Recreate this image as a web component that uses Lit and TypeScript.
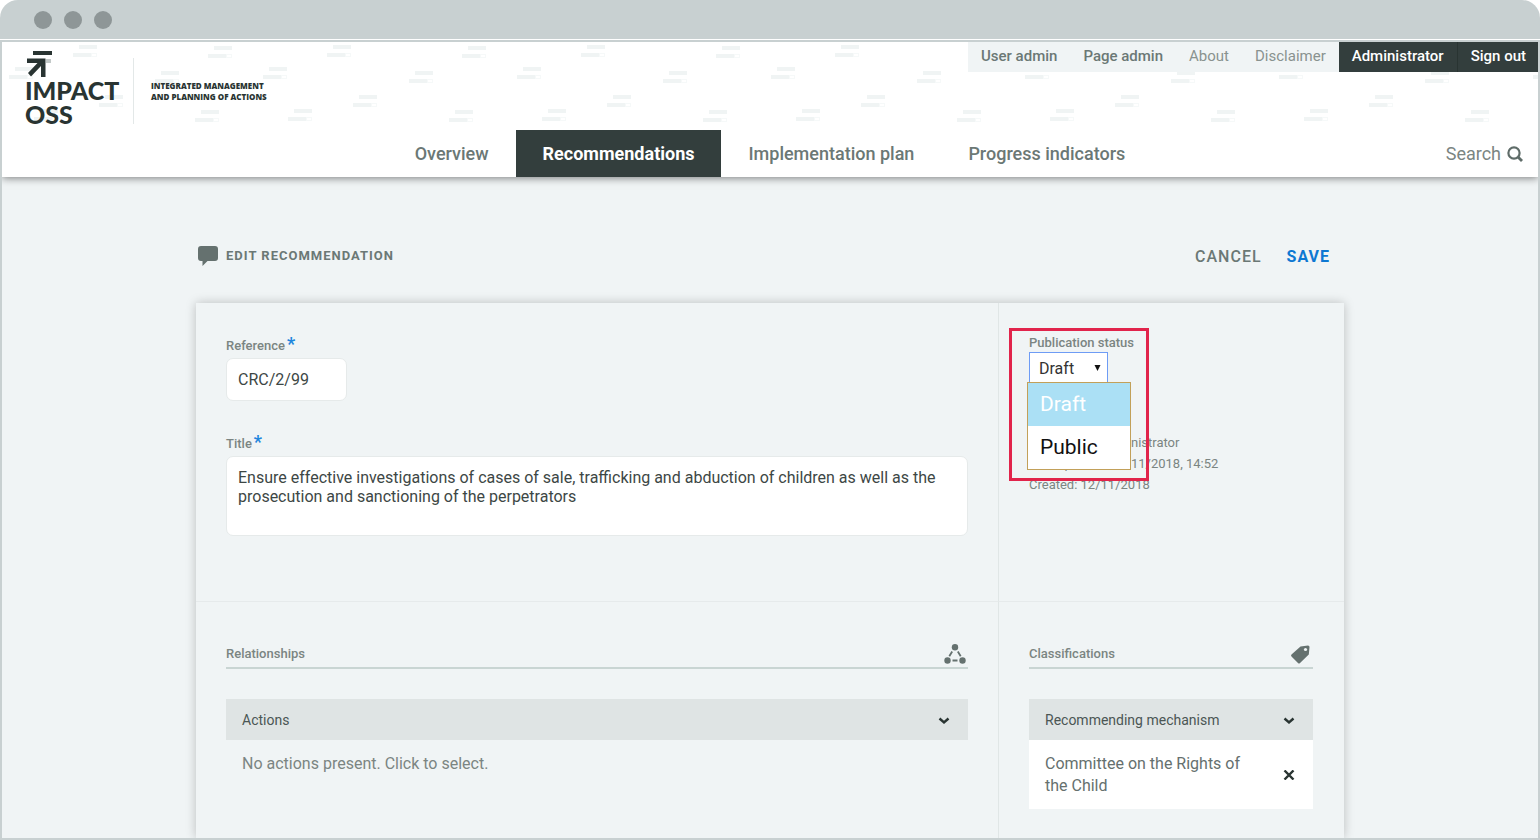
import { LitElement, html, css, svg } from "lit";
import { customElement, property, state } from "lit/decorators.js";
import { classMap } from "lit/directives/class-map.js";

const reset = css`
  *,
  *::before,
  *::after {
    box-sizing: border-box;
  }
  a {
    color: inherit;
    text-decoration: none;
  }
  button {
    border: 0;
    margin: 0;
    padding: 0;
    background: none;
    font: inherit;
    color: inherit;
    cursor: pointer;
  }
  svg {
    display: block;
    flex: none;
  }
`;

/* Positions of the staggered bars inside one 254px wide pattern tile. */
const MARKS = [
  [77, 3],
  [212, 4],
  [159, 29],
  [13, 25],
  [103, 53],
  [199, 68],
  [38, 67],
];

@customElement("site-header")
export class SiteHeader extends LitElement {
  static styles = [
    reset,
    css`
      :host {
        display: block;
        position: relative;
        z-index: 1;
        background: #fff;
        color: #6b7875;
        box-shadow: 0 1px 8px rgba(0, 0, 0, 0.5);
      }
      .pattern {
        position: absolute;
        inset: 0;
        width: 100%;
        height: 88px;
      }
      .top {
        position: relative;
        display: flex;
        justify-content: space-between;
        align-items: flex-start;
        min-height: 88px;
      }
      .brand {
        display: flex;
        align-items: flex-end;
        padding: 9px 0 0 23px;
        color: #293432;
      }
      .name {
        width: 108px;
        font-family: Lato, sans-serif;
        font-size: 25px;
        font-weight: 900;
        line-height: 24px;
      }
      .name svg {
        margin-left: 2px;
      }
      .tagline {
        display: flex;
        align-items: center;
        height: 66px;
        margin-bottom: 2px;
        padding-left: 17px;
        border-left: 1px solid #e3e8e8;
        font-family: "Open Sans", sans-serif;
        font-size: 8px;
        font-weight: 800;
        line-height: 11px;
      }
      .utility {
        display: flex;
        background: #f0f4f5;
        font-size: 15px;
        line-height: 28px;
      }
      .utility a {
        height: 30px;
        padding: 0 13px;
      }
      .utility .plain {
        color: #89928f;
      }
      .utility .strong {
        font-weight: 500;
      }
      .utility .dark {
        background: #333e3d;
        color: #fff;
        font-weight: 500;
      }
      .utility .dark + .dark {
        padding-right: 12px;
        border-left: 1px solid #293432;
      }
      .main {
        position: relative;
        display: grid;
        grid-template-columns: 1fr auto 1fr;
      }
      nav.tabs {
        grid-column: 2;
        display: flex;
      }
      .tabs a {
        padding: 0 27px;
        font-size: 18px;
        font-weight: 500;
        line-height: 47px;
      }
      .tabs .current {
        background: #333e3d;
        color: #fff;
        font-weight: 700;
      }
      .search {
        justify-self: end;
        display: flex;
        align-items: center;
        gap: 6px;
        padding-right: 15px;
        font-size: 18px;
        color: #7b8582;
      }
    `,
  ];

  render() {
    return html`
      <svg class="pattern" aria-hidden="true">
        <defs>
          <pattern id="bars" width="254" height="88" patternUnits="userSpaceOnUse">
            ${MARKS.map(
              ([x, y]) => svg`
                <rect x=${x} y=${y} width="18" height="4" fill="#f0f4f4" />
                <rect x=${x - 6} y=${y + 8} width="18" height="4" fill="#f0f4f4" />
                <rect x=${x + 12.5} y=${y + 8.5} width="5" height="3" fill="none" stroke="#f6f9f9" />
              `
            )}
          </pattern>
        </defs>
        <rect width="100%" height="88" fill="url(#bars)" />
      </svg>
      <div class="top">
        <a class="brand" href="#">
          <span class="name">
            <svg width="26" height="27" viewBox="0 0 26 27" fill="#293432">
              <rect x="6" y="0" width="19" height="4" />
              <rect x="19" y="8" width="5" height="4" fill="#c3c9c8" />
              <path d="M0 7.500H18.500V26H14V15L4 25.500L1 22L10.500 12H0Z" />
            </svg>
            IMPACT<br />OSS
          </span>
          <span class="tagline">INTEGRATED MANAGEMENT<br />AND PLANNING OF ACTIONS</span>
        </a>
        <nav class="utility" aria-label="Account">
          <a class="strong" href="#">User admin</a>
          <a class="strong" href="#">Page admin</a>
          <a class="plain" href="#">About</a>
          <a class="plain" href="#">Disclaimer</a>
          <a class="dark" href="#">Administrator</a>
          <a class="dark" href="#">Sign out</a>
        </nav>
      </div>
      <div class="main">
        <nav class="tabs" aria-label="Main">
          <a href="#">Overview</a>
          <a class="current" href="#" aria-current="page">Recommendations</a>
          <a href="#">Implementation plan</a>
          <a href="#">Progress indicators</a>
        </nav>
        <a class="search" href="#">
          Search
          <svg width="16" height="16" viewBox="0 0 16 16" fill="none" stroke="#5f6c69">
            <circle cx="7" cy="7" r="5.600" stroke-width="2.200" />
            <path d="M11 11L15 15" stroke-width="2.800" />
          </svg>
        </a>
      </div>
    `;
  }
}

@customElement("status-select")
export class StatusSelect extends LitElement {
  @property({ type: Array }) options: string[] = ["Draft", "Public"];
  @state() private value = "Draft";
  @state() private open = true;

  static styles = [
    reset,
    css`
      :host {
        display: block;
        position: relative;
      }
      label {
        display: block;
        margin-bottom: 1px;
        font-size: 13px;
        font-weight: 500;
        line-height: 16px;
        color: #7b8582;
      }
      .box {
        position: relative;
        width: 79px;
      }
      select {
        display: block;
        width: 100%;
        height: 32px;
        padding: 0 9px;
        border: 1px solid #6e9cf5;
        border-radius: 0;
        outline: 0;
        appearance: none;
        background: #fff;
        font-family: inherit;
        font-size: 16px;
        color: #333;
      }
      .arrow {
        position: absolute;
        right: 7px;
        top: 13px;
        pointer-events: none;
      }
      .menu {
        position: absolute;
        top: 30px;
        left: -2px;
        z-index: 2;
        width: 104px;
        margin: 0;
        padding: 0;
        border: 1px solid #c2a059;
        background: #fff;
        list-style: none;
      }
      .option {
        height: 43px;
        padding-left: 12px;
        font-size: 21px;
        line-height: 43px;
        color: #111;
        cursor: pointer;
      }
      .option.active {
        background: #abe0f5;
        color: #fff;
      }
      .highlight {
        position: absolute;
        inset: -7px auto auto -20px;
        z-index: 3;
        width: 140px;
        height: 153px;
        border: 3px solid #e1244b;
        pointer-events: none;
      }
    `,
  ];

  private pick(option: string) {
    this.value = option;
    this.open = false;
  }

  render() {
    return html`
      <label for="status">Publication status</label>
      <div class="box">
        <select id="status" .value=${this.value}>
          ${this.options.map((o) => html`<option value=${o}>${o}</option>`)}
        </select>
        <svg class="arrow" width="7" height="6" viewBox="0 0 7 6">
          <path d="M0.500 0H6.500L3.500 6Z" fill="#111" />
        </svg>
        ${this.open
          ? html`<ul class="menu" role="listbox" aria-label="Publication status">
              ${this.options.map(
                (o) => html`<li
                  role="option"
                  aria-selected=${o === this.value}
                  class=${classMap({ option: true, active: o === this.value })}
                  @click=${() => this.pick(o)}
                >${o}</li>`
              )}
            </ul>`
          : null}
      </div>
      <div class="highlight"></div>
    `;
  }
}

const chevron = html`<svg width="12" height="8" viewBox="0 0 12 8" fill="none" stroke="#293432" stroke-width="2.400">
  <path d="M1.500 1.500L6 5.500L10.500 1.500" />
</svg>`;

@customElement("app-root")
export class AppRoot extends LitElement {
  static styles = [
    reset,
    css`
      :host {
        display: flex;
        flex-direction: column;
        min-height: 100vh;
        background: #fff;
        font-family: Roboto, sans-serif;
        color: #6b7875;
      }
      .chrome {
        display: flex;
        align-items: center;
        gap: 12px;
        height: 39px;
        margin-bottom: 1px;
        padding-left: 34px;
        border-radius: 18px 18px 0 0;
        background: #c8d0d1;
      }
      .dot {
        width: 18px;
        height: 18px;
        border-radius: 50%;
        background: #8e9697;
      }
      .window {
        flex: 1;
        display: flex;
        flex-direction: column;
        border: 2px solid #c8d0d1;
        background: #f0f4f5;
        overflow: hidden;
      }
      main {
        flex: 1;
        display: flex;
        flex-direction: column;
        width: 100%;
        max-width: 1148px;
        margin: 0 auto;
        padding-top: 58px;
      }
      .heading {
        display: flex;
        align-items: center;
        justify-content: space-between;
        height: 40px;
        margin-bottom: 28px;
        padding: 0 14px 0 2px;
      }
      h1 {
        display: flex;
        align-items: center;
        gap: 8px;
        margin: 0;
        font-size: 13px;
        font-weight: 700;
        letter-spacing: 1px;
      }
      h1 svg {
        margin-top: 2px;
      }
      .actions {
        display: flex;
        gap: 25px;
        padding-top: 2px;
        font-size: 16px;
        font-weight: 500;
      }
      .actions button {
        letter-spacing: 1px;
      }
      .save {
        color: #0d78d2;
        font-weight: 700;
      }
      .panel {
        flex: 1;
        display: grid;
        grid-template-columns: minmax(0, 1fr) 346px;
        grid-template-rows: auto 1fr;
        box-shadow: 0 0 10px rgba(0, 0, 0, 0.22);
      }
      .cell {
        padding: 35px 30px 0;
        border-bottom: 1px solid #e6eaeb;
      }
      .cell.side {
        padding-right: 31px;
        border-left: 1px solid #e0e6e6;
      }
      .cell.last {
        padding-top: 36px;
        border-bottom: 0;
      }
      .fields {
        display: grid;
        gap: 35px;
        padding-bottom: 65px;
      }
      .side.status {
        padding-top: 32px;
      }
      .label {
        display: block;
        margin-bottom: 4px;
        font-size: 13px;
        font-weight: 500;
        line-height: 16px;
        color: #7b8582;
      }
      .req {
        margin-left: 2px;
        font-size: 18px;
        font-weight: 700;
        line-height: 0;
        color: #1f86dd;
      }
      .input {
        display: block;
        border: 1px solid #e6eaea;
        border-radius: 7px;
        outline: 0;
        background: #fff;
        font-family: inherit;
        font-size: 16px;
        line-height: 19px;
        color: #3d4745;
      }
      input.input {
        width: 121px;
        height: 43px;
        padding: 0 11px;
      }
      textarea.input {
        width: 100%;
        height: 80px;
        padding: 11px;
        resize: none;
      }
      .meta {
        margin: 48px 0 0;
        padding: 0;
        list-style: none;
        font-size: 13px;
        line-height: 21px;
        color: #7b8582;
      }
      .section {
        display: flex;
        align-items: center;
        justify-content: space-between;
        height: 31px;
        margin-bottom: 30px;
        padding-right: 2px;
        border-bottom: 2px solid #c9d5d3;
      }
      .section svg {
        margin-top: 3px;
      }
      h2 {
        margin: 0;
        padding-top: 2px;
        font-size: 13px;
        font-weight: 500;
        color: #7b8582;
      }
      .group {
        display: flex;
        align-items: center;
        justify-content: space-between;
        width: 100%;
        height: 41px;
        padding: 0 18px 0 16px;
        background: #dfe4e4;
        font-size: 14px;
        color: #4b5654;
      }
      .group svg {
        margin-top: 2px;
      }
      .empty {
        margin: 0;
        padding: 13px 16px 11px;
        font-size: 16px;
        line-height: 22px;
        color: #7b8582;
      }
      .item {
        display: flex;
        align-items: center;
        justify-content: space-between;
        gap: 40px;
        padding: 13px 18px 12px 16px;
        background: #fff;
        font-size: 16px;
        line-height: 22px;
        color: #65706e;
      }
    `,
  ];

  render() {
    return html`
      <div class="chrome" aria-hidden="true">
        <span class="dot"></span><span class="dot"></span><span class="dot"></span>
      </div>
      <div class="window">
        <site-header></site-header>
        <main>
          <div class="heading">
            <h1>
              <svg width="20" height="20" viewBox="0 0 20 20" fill="#65716f">
                <path d="M3 0H17Q20 0 20 3V12Q20 15 17 15H9.500L4.500 20V15H3Q0 15 0 12V3Q0 0 3 0Z" />
              </svg>
              EDIT RECOMMENDATION
            </h1>
            <div class="actions">
              <button type="button">CANCEL</button>
              <button type="button" class="save">SAVE</button>
            </div>
          </div>
          <div class="panel">
            <div class="cell fields">
              <div>
                <label class="label" for="reference">Reference<span class="req">*</span></label>
                <input class="input" id="reference" type="text" value="CRC/2/99" />
              </div>
              <div>
                <label class="label" for="title">Title<span class="req">*</span></label>
                <textarea
                  class="input"
                  id="title"
                  .value=${"Ensure effective investigations of cases of sale, trafficking and abduction of children as well as the prosecution and sanctioning of the perpetrators"}
                ></textarea>
              </div>
            </div>
            <div class="cell side status">
              <status-select></status-select>
              <ul class="meta">
                <li>Updated by: Administrator</li>
                <li>Last updated: 12/11/2018, 14:52</li>
                <li>Created: 12/11/2018</li>
              </ul>
            </div>
            <div class="cell last">
              <div class="section">
                <h2>Relationships</h2>
                <svg width="22" height="20" viewBox="0 0 22 20" fill="#65716f">
                  <circle cx="11" cy="3.200" r="3.200" />
                  <circle cx="3.500" cy="16.500" r="3.200" />
                  <circle cx="18.500" cy="16.500" r="3.200" />
                  <path
                    d="M8.200 7.500L5.300 12.300M13.800 7.500L16.700 12.300M8.500 16.500H13.500"
                    stroke="#65716f"
                    stroke-width="1.800"
                  />
                </svg>
              </div>
              <button type="button" class="group">Actions ${chevron}</button>
              <p class="empty">No actions present. Click to select.</p>
            </div>
            <div class="cell side last">
              <div class="section">
                <h2>Classifications</h2>
                <svg width="22" height="20" viewBox="0 0 22 20">
                  <path
                    d="M11.500 2.500L19 1.500Q20.500 1.500 20.500 3L19.800 10.500L11 19Q10 20 9 19L2.500 12.500Q1.500 11.500 2.500 10.500Z"
                    fill="#65716f"
                  />
                  <circle cx="16.500" cy="5.500" r="1.600" fill="#f0f4f5" />
                </svg>
              </div>
              <button type="button" class="group">Recommending mechanism ${chevron}</button>
              <div class="item">
                <span>Committee on the Rights of the Child</span>
                <button type="button" aria-label="Remove">
                  <svg width="12" height="10" viewBox="0 0 12 10" fill="none" stroke="#293432" stroke-width="2.400">
                    <path d="M1.500 0.500L10.500 9.500M10.500 0.500L1.500 9.500" />
                  </svg>
                </button>
              </div>
            </div>
          </div>
        </main>
      </div>
    `;
  }
}
